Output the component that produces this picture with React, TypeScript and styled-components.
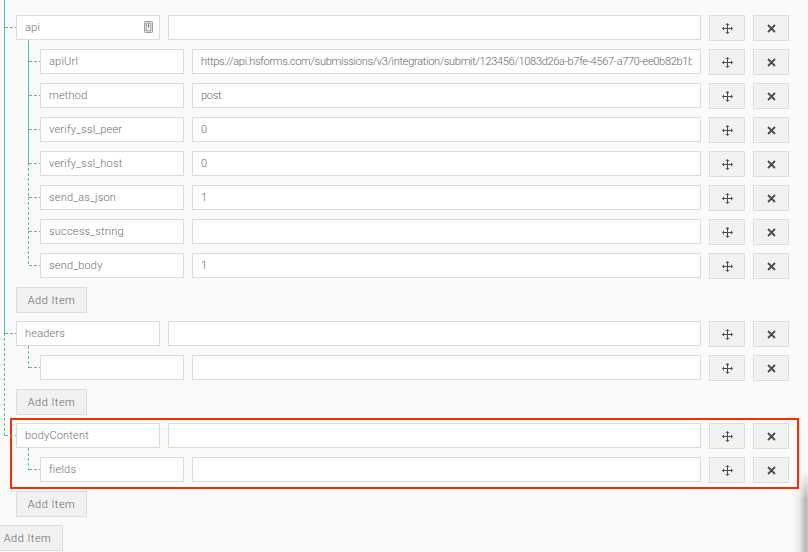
import React from "react";
import styled, { createGlobalStyle, css } from "styled-components";

type TreeNode = {
  key: string;
  value?: string;
  dash?: boolean;
  icon?: boolean;
  mark?: boolean;
  children?: TreeNode[];
};

const data: TreeNode[] = [
  {
    key: "api",
    icon: true,
    children: [
      { key: "apiUrl", value: "https://api.hsforms.com/submissions/v3/integration/submit/123456/1083d26a-b7fe-4567-a770-ee0b82b1b6c1" },
      { key: "method", value: "post" },
      { key: "verify_ssl_peer", value: "0" },
      { key: "verify_ssl_host", value: "0" },
      { key: "send_as_json", value: "1", dash: true },
      { key: "success_string", value: "", dash: true },
      { key: "send_body", value: "1", dash: true },
    ],
  },
  { key: "headers", children: [{ key: "", value: "", dash: true }] },
  { key: "bodyContent", dash: true, mark: true, children: [{ key: "fields", value: "", dash: true }] },
];

const LINE = "#55bdb5";
const FONT = `Roboto, "Liberation Sans", sans-serif`;

const GlobalStyle = createGlobalStyle`
  html, body {
    margin: 0;
    padding: 0;
    background: #fafafa;
    font-family: ${FONT};
  }
`;

const Page = styled.div`
  position: relative;
  width: 808px;
  height: 552px;
  overflow: hidden;
  padding: 15px 19px 0 0;
  box-sizing: border-box;
`;

const Branch = styled.div<{ $root?: boolean }>`
  display: flex;
  flex-direction: column;
  gap: 8px;
  ${(p) => p.$root && css`margin-left: -8px;`}
`;

const ChildList = styled.div`
  display: flex;
  flex-direction: column;
  gap: 8px;
  padding-left: 24px;
`;

const solidLine = css`background: ${LINE};`;
const dashedLine = css`
  background-image: linear-gradient(to bottom, ${LINE} 60%, transparent 60%);
  background-size: 1px 5px;
`;

const Node = styled.div<{ $top?: number; $last: boolean; $first: boolean; $dash: boolean }>`
  position: relative;
  display: flex;
  flex-direction: column;
  gap: 8px;

  &::before {
    content: "";
    position: absolute;
    left: -12px;
    width: 1px;
    top: ${(p) => (p.$first ? `${-(p.$top ?? 9)}px` : "12px")};
    bottom: ${(p) => (p.$last ? "calc(100% - 13px)" : "-21px")};
    display: ${(p) => (p.$last && !p.$first ? "none" : "block")};
    ${(p) => (p.$dash ? dashedLine : solidLine)}
  }

  &::after {
    content: "";
    position: absolute;
    left: -11px;
    top: 12px;
    width: 11px;
    height: 1px;
    background-image: linear-gradient(to right, ${LINE} 60%, transparent 60%);
    background-size: 5px 1px;
  }
`;

const Row = styled.div`
  display: flex;
  align-items: flex-start;
  gap: 8px;
  height: 26px;
`;

const fieldBase = css`
  box-sizing: border-box;
  height: 25px;
  border: 1px solid #dcdcdc;
  background: #fff;
  padding: 0 8px;
  font-family: ${FONT};
  font-size: 11px;
  font-weight: 300;
  outline: none;
  margin: 0;
`;

const KeyCell = styled.div`
  position: relative;
  width: 144px;
  flex: none;
`;

const KeyInput = styled.input`
  ${fieldBase}
  width: 100%;
  color: #6e6e6e;
  letter-spacing: 0.2px;
`;

const ValueInput = styled.input`
  ${fieldBase}
  flex: 1;
  min-width: 0;
  color: #666;
  letter-spacing: -0.3px;
`;

const KeyIcon = styled.svg`
  position: absolute;
  right: 7px;
  top: 6px;
`;

const ToolButton = styled.button`
  box-sizing: border-box;
  width: 36px;
  height: 26px;
  flex: none;
  border: 1px solid #dcdcdc;
  background: #f2f2f2;
  padding: 0;
  margin: 0;
  display: flex;
  align-items: center;
  justify-content: center;
  color: #4a4a4a;
`;

const AddButton = styled.button`
  box-sizing: border-box;
  width: 71px;
  height: 26px;
  border: 1px solid #dcdcdc;
  background: #f1f1f1;
  color: #666;
  font-family: ${FONT};
  font-size: 11px;
  font-weight: 300;
  letter-spacing: 0.5px;
  padding: 0;
  margin: 0;
  align-self: flex-start;
`;

const Mark = styled.div`
  position: absolute;
  top: -5px;
  left: -6px;
  right: -10px;
  height: 71px;
  border: 2px solid #ff2a00;
  box-sizing: border-box;
  pointer-events: none;
`;

const EdgeShadow = styled.div`
  position: absolute;
  right: 0;
  top: 470px;
  bottom: 0;
  width: 16px;
  background: linear-gradient(to right, rgba(0, 0, 0, 0), rgba(0, 0, 0, 0.06) 45%, rgba(0, 0, 0, 0.28) 88%, rgba(0, 0, 0, 0.18));
  -webkit-mask-image: linear-gradient(to bottom, transparent, #000 30px);
  mask-image: linear-gradient(to bottom, transparent, #000 30px);
`;

const MoveIcon = () => (
  <svg width="11" height="11" viewBox="0 0 11 11">
    <path d="M5.5 1.5v8M1.5 5.5h8" stroke="currentColor" strokeWidth="1" fill="none" />
    <path d="M5.5 0l2 2h-4zM5.5 11l2-2h-4zM0 5.5l2-2v4zM11 5.5l-2-2v4z" fill="currentColor" />
  </svg>
);

const CloseIcon = () => (
  <svg width="9" height="9" viewBox="0 0 9 9">
    <path d="M1 1l7 7M8 1l-7 7" stroke="currentColor" strokeWidth="1.8" fill="none" />
  </svg>
);

const HandleIcon = () => (
  <KeyIcon width="9" height="12" viewBox="0 0 9 12">
    <rect x="0.5" y="0.5" width="8" height="11" rx="1" fill="#dadada" stroke="#9a9a9a" />
    <rect x="2.5" y="2.5" width="4" height="7" fill="#f3f3f3" stroke="#b0b0b0" />
    <path d="M4.5 3.5v3" stroke="#666" strokeWidth="1" />
  </KeyIcon>
);

const Item = ({ node }: { node: TreeNode }) => (
  <>
    <Row>
      <KeyCell>
        <KeyInput value={node.key} readOnly />
        {node.icon && <HandleIcon />}
      </KeyCell>
      <ValueInput value={node.value ?? ""} readOnly />
      <ToolButton>
        <MoveIcon />
      </ToolButton>
      <ToolButton>
        <CloseIcon />
      </ToolButton>
    </Row>
    {node.children && <Children nodes={node.children} />}
  </>
);

const Children = ({ nodes, lead }: { nodes: TreeNode[]; lead?: number }) => (
  <>
    <ChildList>
      {nodes.map((n, i) => {
        const last = i === nodes.length - 1;
        const dash = last ? !!n.dash : !!nodes[i + 1].dash;
        return (
          <Node key={i} $first={i === 0} $last={last} $dash={dash} $top={lead}>
            {n.mark && <Mark />}
            <Item node={n} />
          </Node>
        );
      })}
    </ChildList>
    <AddButton>Add Item</AddButton>
  </>
);

export default function App() {
  return (
    <>
      <GlobalStyle />
      <Page>
        <Branch $root>
          <Children nodes={data} lead={15} />
        </Branch>
        <EdgeShadow />
      </Page>
    </>
  );
}
